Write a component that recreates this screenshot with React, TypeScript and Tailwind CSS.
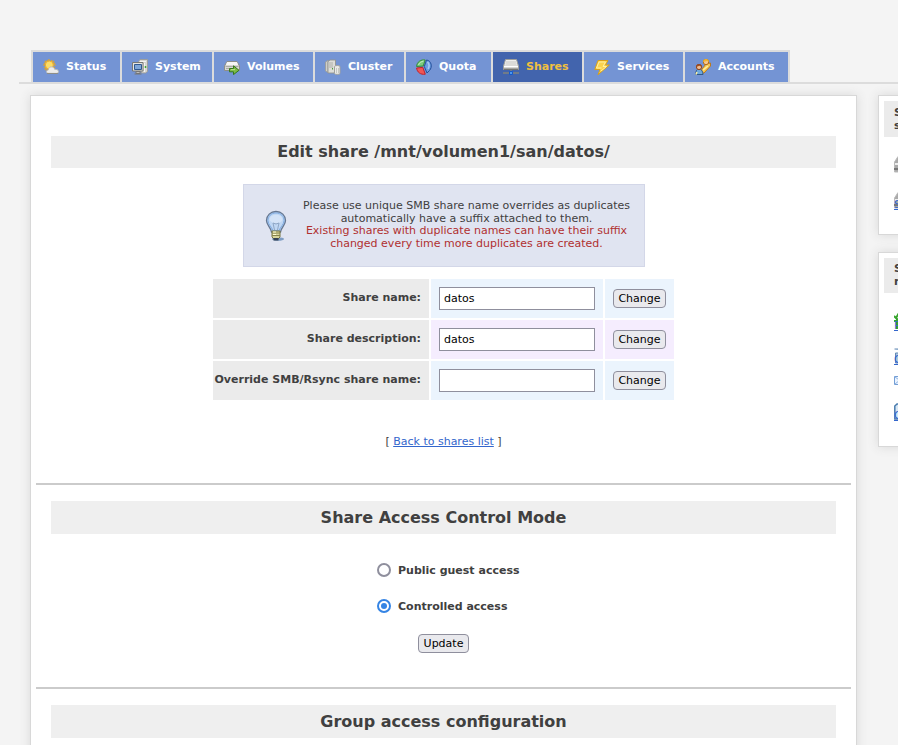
import React from "react";

type IconProps = { name: string };

function TabIcon({ name }: IconProps) {
  return (
    <svg width="16" height="16" viewBox="0 0 16 16" className="shrink-0">
      {name === "Status" && (
        <g>
          <path d="M6 0v13M0 6h13M2 2l9 9M11 2l-9 9M4 1l5 11M1 4l11 5M9 1L4 12M12 4L1 9" stroke="#e9a51c" strokeWidth="1.1" />
          <circle cx="6.3" cy="6" r="4" fill="#fbdc68" stroke="#eeb02c" />
          <path d="M5 14.3c-2-.2-2-3 .2-3.2C5.600 8.500 7.500 7.400 9.400 8c1.600.4 2 1.500 2.200 2.300 2-.2 3.900.7 3.900 2.200 0 1.200-.8 1.900-2 1.900z" fill="#ececea" stroke="#b7b7b2" strokeWidth=".9" />
          <path d="M4 14.500h11" stroke="#8e8e88" />
        </g>
      )}
      {name === "System" && (
        <g>
          <path d="M6.500 2.500L8 .5h7.500v12l-2 1.500h-4z" fill="#d6d6d2" stroke="#9c9c97" strokeWidth=".9" />
          <path d="M8 2.500h6M12.500 4v9" stroke="#f4f4f2" />
          <path d="M13.500 7v2" stroke="#43a735" strokeWidth="1.500" />
          <path d="M.5 3.500h10.500v8.500H.5z" fill="#e6e6e2" stroke="#777874" />
          <path d="M2.500 5.500h7v5h-7z" fill="#7ea6d8" stroke="#31588f" />
          <path d="M4 12.500h4v2H4zM2.500 15h7" fill="#bbb" stroke="#777" />
        </g>
      )}
      {name === "Volumes" && (
        <g>
          <path d="M.5 7L3 2.500h10L15.500 7v4.500h-15z" fill="#d7d7d3" stroke="#8d8e89" />
          <path d="M3 3h10l1 3H2z" fill="#f6f6f4" />
          <path d="M1.500 7.500h13M2 9.500h4" stroke="#a9aaa5" />
          <path d="M5.500 9.500h4V6.800l5.500 4.500L9.500 15.600v-2.800h-4z" fill="#7dba45" stroke="#36791a" />
          <path d="M7 10.600h4" stroke="#b9df8e" />
        </g>
      )}
      {name === "Cluster" && (
        <g>
          <path d="M.5 3L3 1.300v12.200L.5 12z" fill="#cfcfca" stroke="#9c9c97" strokeWidth=".8" />
          <path d="M3 2.500L5 1h5.500v11L9 14H3z" fill="#deded9" stroke="#93948f" strokeWidth=".9" />
          <path d="M4 4h4M4 6h4M4 8h4" stroke="#aeb0aa" />
          <path d="M7.500 9v1.500" stroke="#46a337" />
          <path d="M9.500 7.500c0-1.300 5.500-1.300 5.500 0v7c0 1.200-5.500 1.200-5.500 0z" fill="#ebebe8" stroke="#a1a29d" />
          <path d="M11.500 9v5M13.500 9v5" stroke="#bdbeb9" strokeWidth=".8" />
        </g>
      )}
      {name === "Quota" && (
        <g>
          <path d="M.6 7.500C.8 3 5 .2 9.200 1L7.200 7z" fill="#7dcb7d" stroke="#318b3b" />
          <path d="M2.500 6c1-2.500 3-3.500 5-4" stroke="#c5efc4" fill="none" />
          <path d="M10.500 1c5 .6 6.200 7 3 10.500L11 14 8.300 7.500z" fill="#6b9ce0" stroke="#234f9a" />
          <path d="M11.500 3c2 2 2.300 4 .5 7" stroke="#a8c9f2" fill="none" strokeWidth="1.500" />
          <path d="M.6 9l6.200-.6 2.500 6.800C4.500 16 1 13 .6 9z" fill="#ef5755" stroke="#c51f28" />
        </g>
      )}
      {name === "Shares" && (
        <g>
          <path d="M.5 7L2.500.5h11L15.500 7v3.500H.5z" fill="#d6d6d3" stroke="#9d9e9a" />
          <path d="M3 1h10l1.300 5.300H1.700z" fill="#efefed" />
          <path d="M3 3h10M2.500 5h11" stroke="#c6c6c3" />
          <path d="M1 7.500h14" stroke="#fff" />
          <path d="M1 9.500h14v1.500H1z" fill="#757672" />
          <path d="M8 11v3M0 14h16" stroke="#80827e" strokeWidth="1.500" />
          <path d="M6.500 12.500h3v3h-3z" fill="#4d98ed" stroke="#1758c8" />
        </g>
      )}
      {name === "Services" && (
        <g>
          <path d="M4 1.500h10L11.500 6h3.800L4 15.800l2-5.300H.8z" fill="#fbd34d" stroke="#d8a01c" />
          <path d="M5 3h6.500L9 7.500h3.500L7 12M5 3L2.500 9h5" stroke="#fff0a2" fill="none" />
        </g>
      )}
      {name === "Accounts" && (
        <g>
          <path d="M7 10l4-5 4.500-1v3L9 14H6z" fill="#f6c653" stroke="#bd7a1c" />
          <circle cx="11" cy="3" r="2.700" fill="#f4c58e" stroke="#b76b17" />
          <path d="M8 3c0-4 6-4 6 0l-2-1z" fill="#f1b630" />
          <path d="M.8 15.500C.8 11.500 2 10 4 10s4 2 4 5.500z" fill="#6ea7dd" stroke="#325989" />
          <circle cx="4" cy="8" r="2.600" fill="#f0bd92" stroke="#8b421d" />
          <path d="M1 8c0-4 6-4 6 0L4.500 6.700z" fill="#9c4c22" />
          <path d="M8 11l5-4M2 13l-1 2.500" stroke="#fff0a0" strokeWidth="1.500" />
        </g>
      )}
    </svg>
  );
}

function Bulb() {
  return (
    <svg width="22" height="32" viewBox="0 0 22 32">
      <ellipse cx="13" cy="29" rx="6" ry="1.700" fill="#7f9dc3" />
      <path d="M11 1.500c-5.500 0-9.500 4-9.500 9 0 4.500 4 6.500 5 11.500h9c1-5 5-7 5-11.500 0-5-4-9-9.500-9z" fill="#b0cbed" stroke="#667791" strokeWidth="1.300" />
      <path d="M11 3c-5 0-8 3.500-8 7.500 0 4 3.500 6 5 10h6c1.500-4 5-6 5-10C19 6.500 16 3 11 3z" fill="#c0d7f3" stroke="#83aee3" />
      <path d="M4.500 10c0-7 13-7 13 0-2 4-10 5-13 0z" fill="#d8e6f8" opacity=".8" />
      <path d="M8 13l1.500 7M14 13l-1.500 7M8 13l3 1 3-1" stroke="#8ea6c5" fill="none" />
      <path d="M7 21h8v6l-2 2H9l-2-2z" fill="#d7d59b" stroke="#77743e" />
      <path d="M7 23h8M7 25.500h8" stroke="#87834d" />
      <path d="M8 22h3M8 24.500h3" stroke="#fffed5" />
      <path d="M8.500 28h5v2.500h-5z" fill="#334154" />
    </svg>
  );
}

function SideIcon({ kind }: { kind: string }) {
  return (
    <svg width="16" height="18" viewBox="0 0 16 18" className="shrink-0">
      {kind === "drive" && <g><path d="M.5 16V6L4 .5h8L15.500 6v10z" fill="#aaa" stroke="#bbb" /><path d="M1 8h14" stroke="#eee" strokeWidth="2" /><path d="M0 13h16" stroke="#777" strokeWidth="2" /></g>}
      {kind === "bug" && <g><path d="M0 3l3 3v10M5 0L2 5M0 8h8" stroke="#37a52d" strokeWidth="2" fill="none" /></g>}
      {kind === "person" && <path d="M.5 2h12v4h-11v10h12V6" fill="#adc6df" stroke="#6389b4" />}
      {kind === "mail" && <g><path d="M.5 4.500h15v8H.5z" fill="#eaf3ff" stroke="#759fd5" /><path d="M1 5l7 5 7-5M1 12l5-4" fill="none" stroke="#8db3e4" /></g>}
      {kind === "book" && <path d="M.8 16V3L3 1h12v15z" fill="#d8e7f4" stroke="#497cae" strokeWidth="1.500" />}
    </svg>
  );
}

const tabs = [
  { label: "Status", width: "w-[87px]" },
  { label: "System", width: "w-[90px]" },
  { label: "Volumes", width: "w-[99px]" },
  { label: "Cluster", width: "w-[89px]" },
  { label: "Quota", width: "w-[85px]" },
  { label: "Shares", width: "w-[89px]" },
  { label: "Services", width: "w-[99px]" },
  { label: "Accounts", width: "w-[103px]" },
];

const rows = [
  { label: "Share name:", value: "datos", tint: "bg-[#ebf4fd]" },
  { label: "Share description:", value: "datos", tint: "bg-[#f5edfe]" },
  { label: "Override SMB/Rsync share name:", value: "", tint: "bg-[#ebf4fd]" },
];

function Button({ children, className }: { children: React.ReactNode; className: string }) {
  return (
    <button className={`h-[19px] rounded-[4px] border border-[#8f8f9d] bg-[#e9e9ed] leading-[17px] text-black ${className}`}>
      {children}
    </button>
  );
}

function Heading({ children, className }: { children: React.ReactNode; className: string }) {
  return (
    <h2 className={`mx-5 bg-[#efefef] text-center text-[16px] font-bold text-[#404040] ${className}`}>{children}</h2>
  );
}

function Access({ label, checked }: { label: string; checked: boolean }) {
  return (
    <label className="flex h-4 items-center">
      <span
        className={`mb-[2px] flex size-[14px] items-center justify-center rounded-full border-2 bg-white ${
          checked ? "border-[#3584e4]" : "border-[#8f8f9d]"
        }`}
      >
        {checked && <span className="size-[6px] rounded-full bg-[#3584e4]" />}
      </span>
      <span className="ml-[7px] font-bold">{label}</span>
    </label>
  );
}

function SideItem({ kind, text, className }: { kind: string; text: string; className: string }) {
  return (
    <div className={`ml-[15px] w-[130px] ${className}`}>
      <SideIcon kind={kind} />
      {text && <div className="-mt-[11px] leading-3 text-[#3366cc] underline">{text}</div>}
    </div>
  );
}

export default function App() {
  return (
    <div className="h-[745px] w-[898px] overflow-hidden bg-[#f4f4f4] pt-[50px] font-['DejaVu_Sans',sans-serif] text-[11px] text-[#404040]">
      <nav className="ml-[19px] flex h-[34px] border-b-2 border-[#dcdcdc] pl-3">
        <div className="flex h-[32px] gap-[2px] bg-[#dcdcdc] px-[2px] pt-[2px]">
          {tabs.map((tab) => (
            <a
              key={tab.label}
              className={`flex h-[30px] items-center gap-[7px] pl-[10px] font-bold ${tab.width} ${
                tab.label === "Shares" ? "bg-[#4264ad] text-[#f0c040]" : "bg-[#7494d4] text-white"
              }`}
            >
              <TabIcon name={tab.label} />
              <span>{tab.label}</span>
            </a>
          ))}
        </div>
      </nav>
      <div className="mt-[11px] flex w-[1060px] items-start gap-[21px] pl-[30px]">
        <main className="h-[700px] w-[827px] shrink-0 border border-[#d8d8d8] bg-white pt-10 shadow-[0_0_10px_#d8d8d8]">
          <Heading className="h-8 leading-8">Edit share /mnt/volumen1/san/datos/</Heading>
          <div className="mx-auto mt-4 flex h-[83px] w-[402px] border border-[#d3d7e8] bg-[#e0e4f1]">
            <div className="ml-[21px] mt-[25px]"><Bulb /></div>
            <p className="ml-[14px] mt-[15px] w-[332px] text-center leading-[12.7px]">
              Please use unique SMB share name overrides as duplicates<br />
              automatically have a suffix attached to them.<br />
              <span className="text-[#b03030]">
                Existing shares with duplicate names can have their suffix<br />
                changed every time more duplicates are created.
              </span>
            </p>
          </div>
          <div className="mx-auto mt-3 grid w-[461px] grid-cols-[216px_172px_69px] gap-[2px]">
            {rows.map((row) => (
              <React.Fragment key={row.label}>
                <div className="flex h-[39px] items-center justify-end whitespace-nowrap bg-[#ebebeb] pr-2 font-bold">{row.label}</div>
                <div className={`px-2 pt-2 ${row.tint}`}>
                  <input defaultValue={row.value} className="block h-[23px] w-[156px] border border-[#8f8f9d] bg-white px-[4px] text-black" />
                </div>
                <div className={`px-2 pt-[10px] ${row.tint}`}>
                  <Button className="block w-[53px]">Change</Button>
                </div>
              </React.Fragment>
            ))}
          </div>
          <p className="mt-[34px] h-4 text-center leading-4">
            [ <a className="text-[#3366cc] underline">Back to shares list</a> ]
          </p>
          <hr className="mx-[5px] mt-[33px] h-[2px] border-0 bg-[#cbcbcb]" />
          <Heading className="mt-4 h-[33px] leading-[33px]">Share Access Control Mode</Heading>
          <div className="ml-[346px] mt-[29px] flex flex-col gap-5">
            <Access label="Public guest access" checked={false} />
            <Access label="Controlled access" checked />
          </div>
          <div className="mt-[19px] flex justify-center">
            <Button className="w-[51px]">Update</Button>
          </div>
          <hr className="mx-[5px] mt-[34px] h-[2px] border-0 bg-[#cbcbcb]" />
          <Heading className="mt-4 h-[33px] leading-[33px]">Group access configuration</Heading>
        </main>
        <aside className="w-[180px] shrink-0">
          <section className="h-[140px] border border-[#d8d8d8] bg-white pt-[5px] shadow-[0_0_10px_#d8d8d8]">
            <h3 className="ml-[5px] h-9 bg-[#ebebeb] pl-[10px] pt-[5px] font-bold leading-[13px]">Shares<br />section</h3>
            <SideItem kind="drive" text="" className="mt-[19px] h-[36px]" />
            <SideItem kind="drive" text="SMB/CIFS Setup" className="" />
          </section>
          <section className="mt-[17px] h-[195px] border border-[#d8d8d8] bg-white pt-[5px] shadow-[0_0_10px_#d8d8d8]">
            <h3 className="ml-[5px] h-[35px] bg-[#ebebeb] pl-[10px] pt-1 font-bold leading-[13px]">Support<br />resources</h3>
            <SideItem kind="bug" text="Report bug" className="mt-[20px] h-[34px]" />
            <SideItem kind="person" text="Get support" className="h-[25px]" />
            <SideItem kind="mail" text="" className="h-[31px]" />
            <SideItem kind="book" text="Guide" className="" />
          </section>
        </aside>
      </div>
    </div>
  );
}
